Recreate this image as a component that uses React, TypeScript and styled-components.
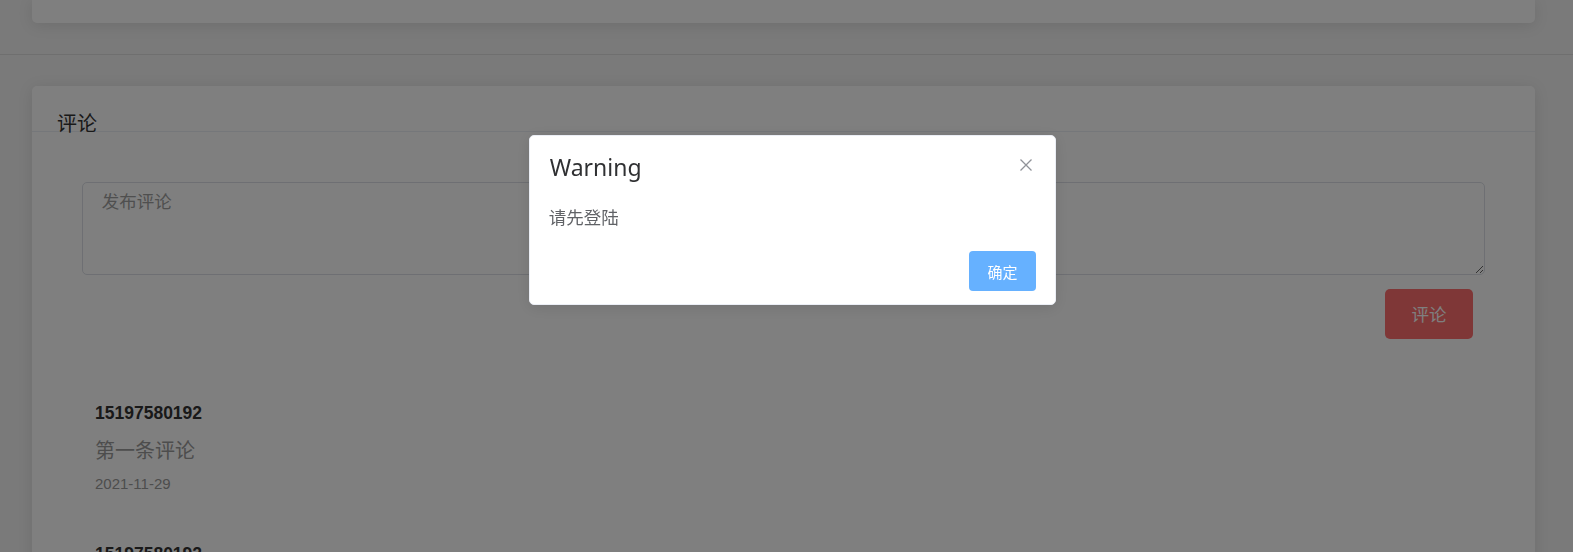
import React from "react";
import styled, { createGlobalStyle } from "styled-components";

const GlobalStyle = createGlobalStyle`
  html, body {
    margin: 0;
    padding: 0;
    height: 100%;
    overflow: hidden;
    background: #f4f4f4;
    font-family: "Liberation Sans", "Noto Sans CJK SC", sans-serif;
  }
  * { box-sizing: border-box; }
`;

const Page = styled.div`
  display: flex;
  flex-direction: column;
`;

const Section = styled.section<{ $divider?: boolean; $top?: number; $bottom?: number }>`
  padding: ${(p) => p.$top ?? 0}px 38px ${(p) => p.$bottom ?? 0}px 32px;
  border-bottom: ${(p) => (p.$divider ? "1px solid #dedede" : "none")};
`;

const Card = styled.div<{ $cut?: boolean; $height?: number }>`
  background: #fff;
  border-radius: ${(p) => (p.$cut ? "0 0 5px 5px" : "5px")};
  box-shadow: 0 2.5px 15px 0 rgba(0, 0, 0, 0.1);
  height: ${(p) => (p.$height ? `${p.$height}px` : "auto")};
  overflow: visible;
`;

const CardHeader = styled.div`
  height: 46px;
  padding: 25px 25px 0;
  border-bottom: 1px solid #ebeef5;
`;

const CardTitle = styled.span`
  display: block;
  font-size: 20px;
  line-height: 26px;
  color: #333;
  white-space: nowrap;
`;

const CardBody = styled.div`
  padding: 25px;
`;

const Form = styled.div`
  padding: 25px 25px 0;
  display: flex;
  flex-direction: column;
`;

const TextArea = styled.textarea`
  display: block;
  width: 100%;
  height: 93px;
  padding: 6.25px 18.75px;
  border: 1px solid #dcdfe6;
  border-radius: 5px;
  font-family: "Liberation Sans", "Noto Sans CJK SC", sans-serif;
  font-size: 17.5px;
  line-height: 1.5;
  color: #606266;
  outline: none;
  &::placeholder {
    color: #9e9e9e;
  }
`;

const ActionRow = styled.div`
  display: flex;
  justify-content: flex-end;
  margin-top: 14px;
  padding-right: 12px;
`;

const DangerButton = styled.button`
  height: 50px;
  padding: 0 26.5px;
  border: none;
  border-radius: 5px;
  background: #fe6e6e;
  color: #fff;
  font-family: "Noto Sans CJK SC", sans-serif;
  font-size: 17.5px;
  line-height: 1;
  cursor: pointer;
`;

const CommentList = styled.div`
  margin-top: 64px;
  padding-left: 38px;
  display: flex;
  flex-direction: column;
  gap: 49.5px;
`;

const CommentItem = styled.div`
  display: flex;
  flex-direction: column;
`;

const UserName = styled.div`
  font-size: 17.5px;
  line-height: 20px;
  font-weight: bold;
  color: #333;
`;

const CommentText = styled.div`
  margin-top: 12px;
  font-family: "Noto Sans CJK SC", sans-serif;
  font-size: 20px;
  line-height: 30px;
  color: #9a9a9a;
`;

const CommentDate = styled.div`
  margin-top: 9px;
  font-size: 15px;
  line-height: 20px;
  color: #9a9a9a;
`;

const Overlay = styled.div`
  position: fixed;
  inset: 0;
  background: rgba(0, 0, 0, 0.5);
  display: flex;
  justify-content: center;
  align-items: flex-start;
  padding: 135px 0 0 12px;
`;

const MessageBox = styled.div`
  position: relative;
  width: 527px;
  padding-bottom: 12.5px;
  background: #fff;
  border: 1px solid #ebeef5;
  border-radius: 5px;
  box-shadow: 0 2.5px 15px 0 rgba(0, 0, 0, 0.1);
  font-family: "Noto Sans", "Noto Sans CJK SC", sans-serif;
`;

const BoxHeader = styled.div`
  padding: 19.5px 18.75px 11.25px;
`;

const BoxTitle = styled.div`
  font-size: 23px;
  line-height: 23px;
  color: #303133;
  padding-left: 1px;
`;

const CloseButton = styled.button`
  position: absolute;
  top: 19px;
  right: 19px;
  width: 20px;
  height: 20px;
  padding: 0;
  border: none;
  background: transparent;
  display: flex;
  align-items: center;
  justify-content: center;
  cursor: pointer;
`;

const BoxContent = styled.div`
  padding: 12.5px 18.75px;
  font-size: 17.5px;
  line-height: 30px;
  color: #606266;
  font-family: "Noto Sans CJK SC", sans-serif;
`;

const BoxButtons = styled.div`
  padding: 6.25px 18.75px 0;
  display: flex;
  justify-content: flex-end;
`;

const PrimaryButton = styled.button`
  height: 40px;
  padding: 0 18.75px;
  border: none;
  border-radius: 4px;
  background: #66b1ff;
  color: #fff;
  font-family: "Noto Sans CJK SC", sans-serif;
  font-size: 15px;
  line-height: 1;
  cursor: pointer;
`;

const comments = [
  { user: "15197580192", text: "第一条评论", date: "2021-11-29" },
  { user: "15197580192", text: "第二条评论", date: "2021-11-29" },
];

export default function App() {
  return (
    <>
      <GlobalStyle />
      <Page>
        <Section $divider $bottom={31}>
          <Card $cut $height={23} />
        </Section>
        <Section $top={31}>
          <Card>
            <CardHeader>
              <CardTitle>评论</CardTitle>
            </CardHeader>
            <CardBody>
              <Form>
                <TextArea placeholder="发布评论" />
                <ActionRow>
                  <DangerButton>评论</DangerButton>
                </ActionRow>
              </Form>
              <CommentList>
                {comments.map((c, i) => (
                  <CommentItem key={i}>
                    <UserName>{c.user}</UserName>
                    <CommentText>{c.text}</CommentText>
                    <CommentDate>{c.date}</CommentDate>
                  </CommentItem>
                ))}
              </CommentList>
            </CardBody>
          </Card>
        </Section>
      </Page>
      <Overlay>
        <MessageBox>
          <BoxHeader>
            <BoxTitle>Warning</BoxTitle>
          </BoxHeader>
          <CloseButton aria-label="Close">
            <svg width="12" height="12" viewBox="0 0 12 12">
              <path d="M0.5 0.5 L11.5 11.5 M11.5 0.5 L0.5 11.5" stroke="#909399" strokeWidth="1.3" fill="none" />
            </svg>
          </CloseButton>
          <BoxContent>请先登陆</BoxContent>
          <BoxButtons>
            <PrimaryButton>确定</PrimaryButton>
          </BoxButtons>
        </MessageBox>
      </Overlay>
    </>
  );
}
